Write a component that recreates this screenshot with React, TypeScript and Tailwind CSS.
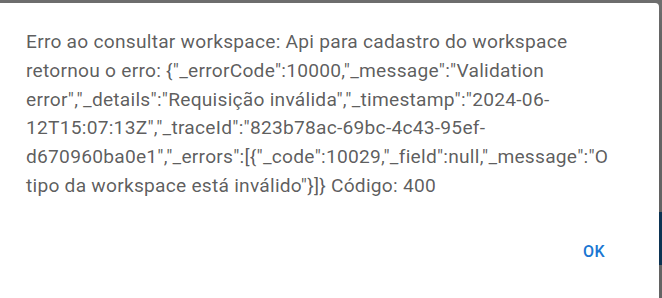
import { FC } from "react";

const message =
  'Erro ao consultar workspace: Api para cadastro do workspace retornou o erro: {"_errorCode":10000,"_message":"Validation error","_details":"Requisição inválida","_timestamp":"2024-06-12T15:07:13Z","_traceId":"823b78ac-69bc-4c43-95ef-d670960ba0e1","_errors":[{"_code":10029,"_field":null,"_message":"O tipo da workspace está inválido"}]} Código: 400';

const App: FC = () => {
  return (
    <div className="relative flex h-[298px] w-[662px] overflow-hidden bg-[#6f6f6f] pt-[3px] pr-[3px] font-['Roboto',sans-serif]">
      {/* page content peeking out behind the backdrop */}
      <span className="absolute right-0 top-[212px] h-[53px] w-[3px] bg-[#0f3a5c]" />
      <div className="relative flex flex-1 flex-col rounded-tr-[4px] bg-white shadow-[0_11px_15px_-7px_rgba(0,0,0,0.2),0_24px_38px_3px_rgba(0,0,0,0.14)]">
        <div className="pl-[26px] pr-[23px] pt-[25px] pb-[33px]">
          <p className="text-[19.2px] leading-[28.8px] tracking-[0.24px] text-black/65">
            {message}
          </p>
        </div>
        <div className="flex justify-end pr-[33px]">
          <button className="h-[36px] min-w-[64px] rounded px-2 text-[16px] font-medium uppercase tracking-[0.4px] text-[#1976d2]">
            OK
          </button>
        </div>
      </div>
    </div>
  );
};

export default App;
